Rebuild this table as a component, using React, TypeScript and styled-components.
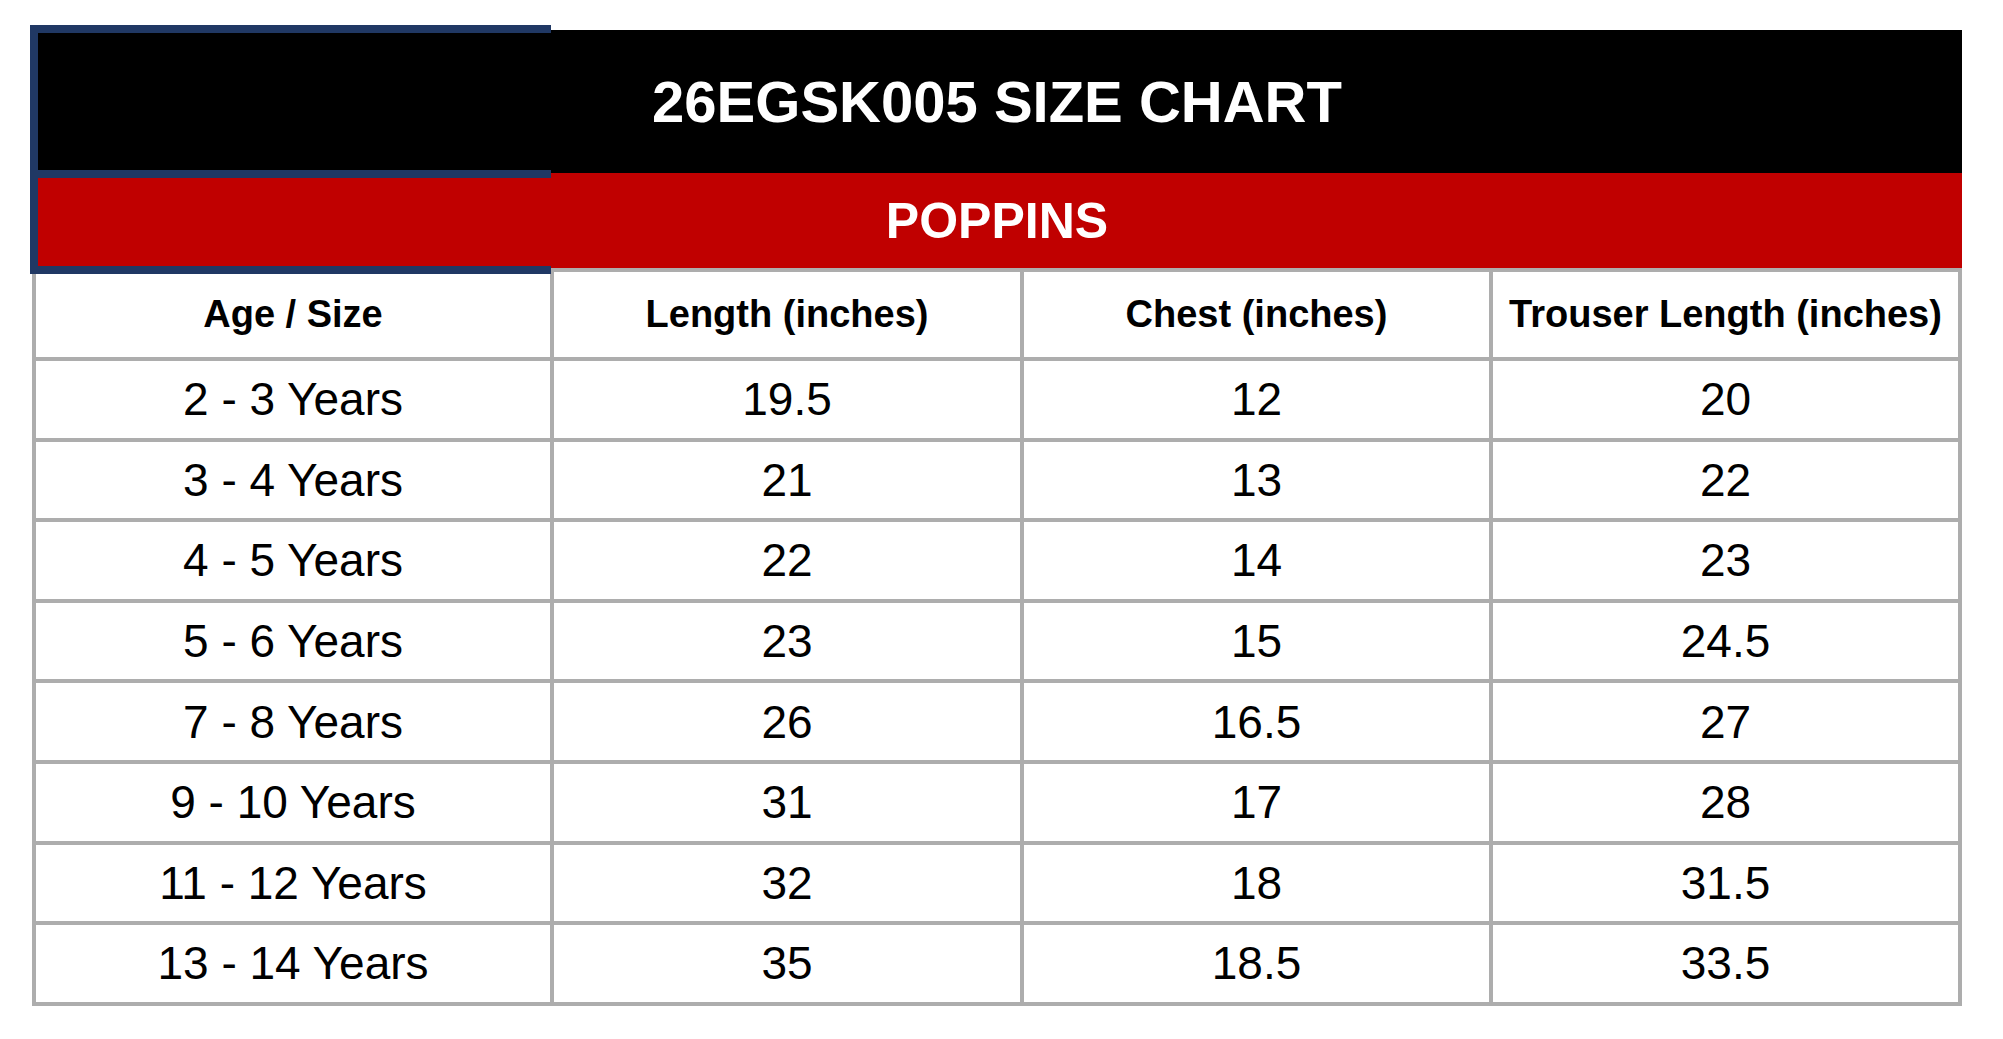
import styled, { createGlobalStyle } from "styled-components";

const GlobalStyle = createGlobalStyle`
  html, body {
    margin: 0;
    padding: 0;
    background: #fff;
    font-family: "Liberation Sans", Arial, sans-serif;
  }
`;

const columns: string[] = [
  "Age / Size",
  "Length (inches)",
  "Chest (inches)",
  "Trouser Length (inches)",
];

const rows: string[][] = [
  ["2 - 3 Years", "19.5", "12", "20"],
  ["3 - 4 Years", "21", "13", "22"],
  ["4 - 5 Years", "22", "14", "23"],
  ["5 - 6 Years", "23", "15", "24.5"],
  ["7 - 8 Years", "26", "16.5", "27"],
  ["9 - 10 Years", "31", "17", "28"],
  ["11 - 12 Years", "32", "18", "31.5"],
  ["13 - 14 Years", "35", "18.5", "33.5"],
];

const App = () => {
  return (
    <>
      <GlobalStyle />
      <Chart>
        <Banner>
          <TitleBar>26EGSK005 SIZE CHART</TitleBar>
          <SubBar>POPPINS</SubBar>
          <NavyFrame />
        </Banner>
        <Grid>
          {columns.map((c) => (
            <Cell key={c} $head>
              {c}
            </Cell>
          ))}
          {rows.map((r) =>
            r.map((v, i) => <Cell key={r[0] + i}>{v}</Cell>)
          )}
        </Grid>
      </Chart>
    </>
  );
};

const Chart = styled.div`
  width: 1930px;
  margin: 30px 0 0 32px;
`;

const Banner = styled.div`
  position: relative;
  display: flex;
  flex-direction: column;
`;

const TitleBar = styled.div`
  height: 143px;
  background-color: #000;
  color: #fff;
  display: flex;
  align-items: center;
  justify-content: center;
  font-weight: 700;
  font-size: 58px;
`;

const SubBar = styled.div`
  height: 95px;
  background-color: #c00000;
  color: #fff;
  display: flex;
  align-items: center;
  justify-content: center;
  font-weight: 700;
  font-size: 50px;
`;

/* the thick navy outline drawn round the left part of the two header bars */
const NavyFrame = styled.div`
  position: absolute;
  left: -2px;
  top: -5px;
  width: 521px;
  height: 249px;
  box-sizing: border-box;
  border: 8px solid #203864;
  border-right: 0;
  &::after {
    content: "";
    position: absolute;
    left: 0;
    right: 0;
    top: 137px;
    height: 8px;
    background-color: #203864;
  }
`;

const Grid = styled.div`
  display: grid;
  grid-template-columns: 514px 466px 465px 465px;
  gap: 4px;
  border: 4px solid #adadad;
  background-color: #adadad;
`;

const Cell = styled.div<{ $head?: boolean }>`
  height: ${(p) => (p.$head ? "85px" : "76.6px")};
  background-color: #fff;
  color: #000;
  display: flex;
  align-items: center;
  justify-content: center;
  font-weight: ${(p) => (p.$head ? 700 : 400)};
  font-size: ${(p) => (p.$head ? "38px" : "46px")};
  white-space: nowrap;
`;

export default App;
